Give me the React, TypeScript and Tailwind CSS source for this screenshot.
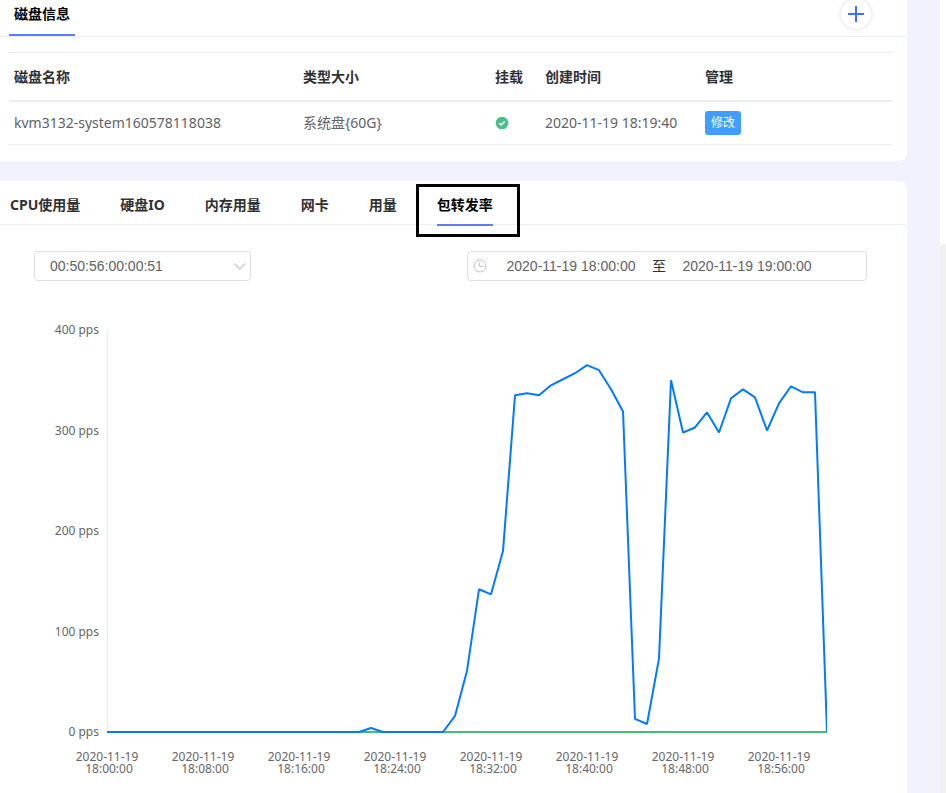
import { useState } from "react";

const tabs = ["CPU使用量", "硬盘IO", "内存用量", "网卡", "用量", "包转发率"];

const yLabels = ["400 pps", "300 pps", "200 pps", "100 pps", "0 pps"];

const xLabels = [
  "18:00:00",
  "18:08:00",
  "18:16:00",
  "18:24:00",
  "18:32:00",
  "18:40:00",
  "18:48:00",
  "18:56:00",
];

// one sample per minute, 18:00 - 19:00
const packets = [
  0, 0, 0, 0, 0, 0, 0, 0, 0, 0, 0, 0, 0, 0, 0, 0, 0, 0, 0, 0, 0, 0, 4, 0, 0, 0,
  0, 0, 0, 16, 61, 142, 137, 180, 335, 337, 335, 345, 351, 357, 365, 360, 341,
  319, 13, 8, 73, 350, 298, 303, 318, 298, 332, 341, 333, 300, 327, 344, 338,
  338, 0,
];

const points = packets.map((v, i) => `${i * 12},${402 - v * 1.005}`).join(" ");

function PlusIcon() {
  return (
    <svg viewBox="0 0 16 16" className="size-4" stroke="currentColor" strokeWidth="2">
      <path d="M8 0v16M0 8h16" />
    </svg>
  );
}

function CheckIcon() {
  return (
    <svg viewBox="0 0 14 14" className="size-3.5" role="img" aria-label="已挂载">
      <circle cx="7" cy="7" r="6.3" fill="#46c18c" />
      <path d="M4.3 7.1l2 1.9 3.5-3.7" fill="none" stroke="#fff" strokeWidth="1.5" />
    </svg>
  );
}

function ClockIcon() {
  return (
    <svg
      viewBox="0 0 14 14"
      className="size-3.5 shrink-0 text-[#c0c4cc]"
      fill="none"
      stroke="currentColor"
    >
      <circle cx="7" cy="7" r="6" />
      <path d="M6.5 3.5v4h4" />
    </svg>
  );
}

function ChevronIcon() {
  return (
    <svg
      viewBox="0 0 14 14"
      className="pointer-events-none absolute right-1 top-2 size-3.5 text-[#c0c4cc]"
      fill="none"
      stroke="currentColor"
      strokeWidth="1.2"
    >
      <path d="M1.5 4.5l5.3 5.3 5.3-5.3" />
    </svg>
  );
}

function DiskCard() {
  return (
    <section className="bg-white rounded-br-lg pb-4">
      <div className="flex h-[37px] justify-between border-b border-[#ebeef5] pl-[9px] pr-9">
        <h2 className="h-9 border-b-2 border-[#5c7cfa] px-[5px] pt-1 text-sm leading-5 font-bold text-black">
          磁盘信息
        </h2>
        <button
          aria-label="添加"
          className="-mt-px flex size-[30px] items-center justify-center rounded-full bg-white text-[#3f6fff] shadow-[0_0_5px_rgba(0,0,0,0.15)]"
        >
          <PlusIcon />
        </button>
      </div>

      <div className="mt-[15px] pl-[9px] pr-[15px]">
        <table className="w-full table-fixed border-separate border-spacing-0 border-t border-[#ebeef5] text-left text-sm">
          <colgroup>
            <col className="w-[289px]" />
            <col className="w-48" />
            <col className="w-[50px]" />
            <col className="w-40" />
            <col />
          </colgroup>
          <thead className="text-[#303133]">
            <tr>
              {["磁盘名称", "类型大小", "挂载", "创建时间", "管理"].map((name) => (
                <th key={name} className="h-[49px] border-b-2 border-[#ebeef5] px-[5px] font-bold">
                  {name}
                </th>
              ))}
            </tr>
          </thead>
          <tbody className="text-[#606266]">
            <tr>
              <td className="h-[43px] border-b border-[#ebeef5] px-[5px]">
                kvm3132-system160578118038
              </td>
              <td className="border-b border-[#ebeef5] px-[5px]">系统盘{"{60G}"}</td>
              <td className="border-b border-[#ebeef5] px-[5px]">
                <CheckIcon />
              </td>
              <td className="border-b border-[#ebeef5] px-[5px]">2020-11-19 18:19:40</td>
              <td className="border-b border-[#ebeef5] px-[5px]">
                <button className="block h-6 rounded-[3px] bg-[#409eff] px-1.5 text-xs text-white">
                  修改
                </button>
              </td>
            </tr>
          </tbody>
        </table>
      </div>
    </section>
  );
}

function PacketChart() {
  return (
    <div className="mt-[49px] flex pr-20 text-[#666]">
      <div className="-my-1.5 flex h-[414px] w-[107px] shrink-0 flex-col justify-between pr-2 text-right text-xs leading-3">
        {yLabels.map((label) => (
          <span key={label}>{label}</span>
        ))}
      </div>
      <div className="min-w-0 flex-1">
        <svg viewBox="0 0 720 403" preserveAspectRatio="none" className="block h-[403px] w-full">
          <path d="M0.5 0V402" stroke="#e6e8f2" />
          <path d="M0 402H720" stroke="#3fbf6f" strokeWidth="2" />
          <polyline
            points={points}
            fill="none"
            stroke="#007bff"
            strokeWidth="2"
            strokeLinejoin="bevel"
            vectorEffect="non-scaling-stroke"
          />
        </svg>
        {/* each label is centred under its own tick, so the row starts half a step early */}
        <div className="-ml-[calc(100%/15)] mt-[18px] grid w-[calc(100%*16/15)] grid-cols-8 text-center text-xs leading-3">
          {xLabels.map((time) => (
            <div key={time}>
              <span className="block">2020-11-19</span>
              <span className="block pl-1">{time}</span>
            </div>
          ))}
        </div>
      </div>
    </div>
  );
}

function UsageCard() {
  const [active, setActive] = useState("包转发率");
  const [mac, setMac] = useState("00:50:56:00:00:51");
  const [start, setStart] = useState("2020-11-19 18:00:00");
  const [end, setEnd] = useState("2020-11-19 19:00:00");

  return (
    <section className="mt-5 flex-1 rounded-tr-lg bg-white pb-4">
      <div className="flex h-11 gap-10 border-b border-[#ebeef5] pl-2.5 text-sm font-bold text-[#303133]">
        {tabs.map((tab) => (
          <button
            key={tab}
            onClick={() => setActive(tab)}
            className={
              tab === active
                ? "relative h-[45px] border-b-2 border-[#5c7cfa] pt-1 text-black"
                : "h-[45px] border-b-2 border-transparent pt-1"
            }
          >
            {tab}
            {tab === active && (
              <span className="absolute -left-[21px] top-[3px] h-[53px] w-[104px] border-3 border-black" />
            )}
          </button>
        ))}
      </div>

      <div className="mt-[26px] flex justify-between pl-[34px] pr-10 font-['Liberation_Sans','Noto_Sans_CJK_SC',sans-serif] text-sm text-[#606266]">
        <div className="relative w-[217px]">
          <select
            aria-label="网卡地址"
            value={mac}
            onChange={(e) => setMac(e.target.value)}
            className="h-[30px] w-full appearance-none rounded border border-[#dcdfe6] bg-white px-[15px] outline-none"
          >
            <option>00:50:56:00:00:51</option>
          </select>
          <ChevronIcon />
        </div>

        <div className="flex h-[30px] w-[400px] items-center rounded border border-[#dcdfe6] pl-[5px]">
          <ClockIcon />
          <input
            aria-label="开始时间"
            value={start}
            onChange={(e) => setStart(e.target.value)}
            className="ml-1.5 w-[156px] text-center outline-none"
          />
          <span className="w-5 text-center text-[#303133]">至</span>
          <input
            aria-label="结束时间"
            value={end}
            onChange={(e) => setEnd(e.target.value)}
            className="w-[156px] text-center outline-none"
          />
        </div>
      </div>

      <PacketChart />
    </section>
  );
}

export default function App() {
  return (
    <div className="flex min-h-screen bg-[#f2f2fc] font-['Noto_Sans','Noto_Sans_CJK_SC',sans-serif] text-[#606266]">
      <main className="flex min-w-0 flex-1 flex-col pr-[33px]">
        <DiskCard />
        <UsageCard />
      </main>
      <div className="flex w-1.5 flex-col bg-white">
        <div className="mt-[244px] flex-1 rounded-tl bg-[#f1f1f1]" />
      </div>
    </div>
  );
}
